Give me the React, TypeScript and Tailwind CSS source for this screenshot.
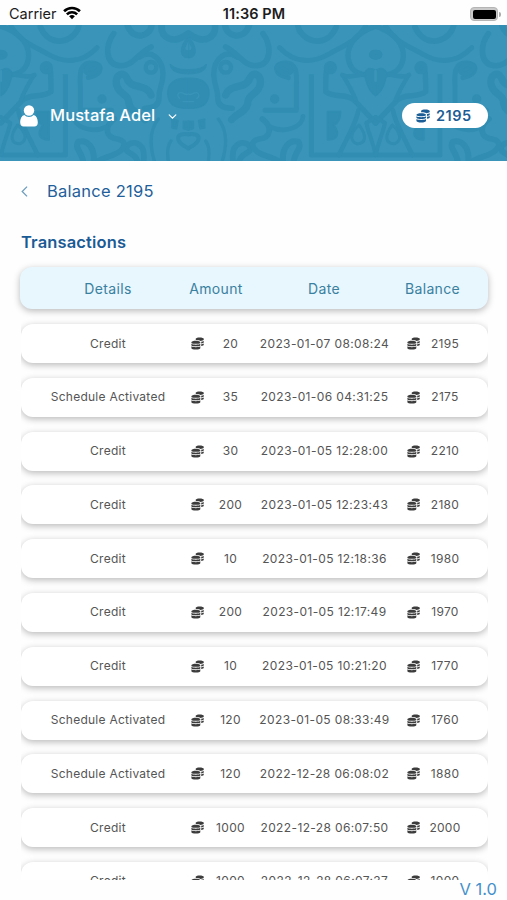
const ROWS = [
  ["Credit", "20", "2023-01-07 08:08:24", "2195"],
  ["Schedule Activated", "35", "2023-01-06 04:31:25", "2175"],
  ["Credit", "30", "2023-01-05 12:28:00", "2210"],
  ["Credit", "200", "2023-01-05 12:23:43", "2180"],
  ["Credit", "10", "2023-01-05 12:18:36", "1980"],
  ["Credit", "200", "2023-01-05 12:17:49", "1970"],
  ["Credit", "10", "2023-01-05 10:21:20", "1770"],
  ["Schedule Activated", "120", "2023-01-05 08:33:49", "1760"],
  ["Schedule Activated", "120", "2022-12-28 06:08:02", "1880"],
  ["Credit", "1000", "2022-12-28 06:07:50", "2000"],
  ["Credit", "1000", "2022-12-28 06:07:37", "1000"],
];

function Coins({ className }: { className: string }) {
  return (
    <svg viewBox="0 0 26 26" className={className} fill="currentColor">
      <path d="M9.500 3.200C10.500 1.800 13.500.8 17.300.8c4.600 0 8.200 1.200 8.200 2.800v2c-1 1.300-3.600 2-6.400 2.200-2.300-1.500-6-2-9.600-1.800z" />
      <path d="M20.400 9.400c2-.2 4-.7 5.100-1.500v2.800c0 1.100-2.100 2-5.100 2.400zM20.400 14.600c2-.2 4-.7 5.100-1.500v2.600c0 1.100-2.100 2-5.100 2.400z" />
      <path d="M9.700 7.700c4.900 0 8.900 1.300 8.900 3v1.100c-1.500 1.200-5 1.800-8.900 1.800s-7.400-.6-8.900-1.800v-1.100c0-1.700 4-3 8.900-3z" />
      <path d="M.8 13.600c1.500 1.200 5 1.700 8.900 1.700s7.400-.5 8.900-1.700v3.300c-1.500 1.300-5 1.800-8.900 1.800s-7.400-.5-8.900-1.800z" />
      <path d="M.8 18.700c1.500 1.200 5 1.700 8.900 1.700s7.400-.5 8.900-1.700v3.700c0 1.600-4 2.800-8.900 2.800S.8 24 .8 22.400z" />
    </svg>
  );
}

// Half of the ornament; it is mirrored about both of its vertical edges.
function Ornament() {
  return (
    <g fill="none" stroke="#318db2" strokeWidth="14" strokeLinecap="round" strokeLinejoin="round">
      <path d="M80 76C84 116 45 130 14 110L0 102" strokeWidth="20" />
      <path d="M0 112C14 122 24 146 20 162C16 174 8 174 0 174Z" strokeWidth="3" fill="#318db2" />
      <path d="M0 124L9 144C9 152 4 152 0 152Z" stroke="none" fill="#3a94b9" />
      <path d="M0 210C28 211 44 206 54 194C52 214 28 222 0 222Z" strokeWidth="4" fill="#318db2" />
      <path d="M0 236C44 234 64 254 62 284C59 316 40 326 0 326Z" strokeWidth="4" fill="#318db2" />
      <path d="M0 283C10 290 16 274 28 280C34 284 32 292 26 296M0 306H16" stroke="#3a94b9" strokeWidth="4" />
      <path d="M146 172C110 148 78 178 76 222C76 258 90 266 88 296C88 320 110 326 132 326" strokeWidth="16" />
      <circle cx="112" cy="203" r="16" strokeWidth="13" />
      <path d="M112 286C126 250 174 270 184 236C194 212 220 226 216 252C212 286 178 280 178 312C174 336 142 344 130 360" strokeWidth="22" />
      <path d="M224 102C250 138 250 194 206 198C166 202 152 160 112 142" strokeWidth="17" />
      <path d="M110 76C114 112 166 124 182 78" strokeWidth="19" />
      <path d="M274 144C318 190 370 192 420 164C470 136 502 128 532 79" strokeWidth="15" />
      <path d="M328 76C334 122 412 154 444 82" strokeWidth="17" />
      <path d="M300 234C254 224 254 190 292 190C326 190 326 222 324 260V332H230" strokeWidth="15" />
      <path d="M266 202C280 188 306 194 308 216C300 226 278 226 266 202Z" fill="#318db2" />
      <circle cx="259" cy="298" r="7" />
      <path d="M369 224V466H562" strokeWidth="15" strokeLinecap="butt" />
      <path d="M428 198C408 204 414 230 412 252V276C436 296 480 280 500 304L562 370" strokeWidth="16" />
      <circle cx="426" cy="204" r="13" fill="#318db2" />
      <path d="M464 228C474 244 490 270 502 300" strokeWidth="13" />
      <path d="M562 80C500 100 474 140 480 178C486 212 506 220 532 226" strokeWidth="16" />
      <path d="M462 226C490 240 520 218 534 226" strokeWidth="14" />
      <path d="M528 220C540 200 552 206 562 212V288C544 278 534 256 528 220Z" strokeWidth="4" fill="#318db2" />
      <path d="M562 214V244" stroke="#3a94b9" strokeWidth="7" />
      <ellipse cx="562" cy="165" rx="13" ry="8" fill="#318db2" />
      <path d="M510 332C504 370 478 410 452 466" strokeWidth="14" />
      <path d="M512 376C490 396 480 420 504 432C532 434 538 410 512 376Z" strokeWidth="9" />
      <path d="M562 352L534 370C540 400 552 420 562 466" strokeWidth="12" />
      <path d="M456 336H418V420C450 420 454 400 436 376C452 370 456 352 456 336Z" strokeWidth="6" fill="#318db2" />
      <path d="M32 364L48 360V384L36 386ZM0 366H14V386L0 390Z" strokeWidth="7" fill="#318db2" />
      <path d="M0 446C44 424 38 398 0 404" strokeWidth="12" />
      <path d="M90 358C116 390 118 430 102 484M52 424C64 440 64 460 60 484" strokeWidth="10" />
      <path d="M134 484C126 424 174 418 186 444C190 462 160 458 152 484" strokeWidth="17" />
      <path d="M222 358C252 380 250 414 212 418C180 424 190 452 226 466C250 474 266 480 274 486" strokeWidth="17" />
      <path d="M284 486C280 446 302 418 330 426C344 444 318 458 316 486" strokeWidth="18" />
      <path d="M246 382C296 404 344 378 344 350" strokeWidth="14" />
    </g>
  );
}

function HeaderPattern() {
  return (
    <svg viewBox="0 76 1521 408" preserveAspectRatio="none" className="absolute inset-0 h-full w-full blur-[0.5px]">
      <g transform="translate(565 0)"><Ornament /></g>
      <g transform="translate(565 0) scale(-1 1)"><Ornament /></g>
      <g transform="translate(1689 0) scale(-1 1)"><Ornament /></g>
    </svg>
  );
}

function StatusBar() {
  return (
    <div className="grid h-[25px] grid-cols-3 items-center pt-[3px] text-[14.5px] text-[#1c1c1c]">
      <div className="flex items-center gap-[6px] pl-[9px]">
        <span>Carrier</span>
        <svg viewBox="0 0 20 15" className="h-[14px] w-[18px] -translate-y-px">
          <g fill="none" stroke="#000" strokeWidth="2.900">
            <path d="M1.200 5.600a12.500 12.500 0 0 1 17.600 0" />
            <path d="M4.300 9a8.200 8.200 0 0 1 11.400 0" />
          </g>
          <path d="M10 14.500l-3.200-3.300a4.600 4.600 0 0 1 6.400 0z" />
        </svg>
      </div>
      <span className="pl-px text-center text-[14.500px] font-semibold tracking-[0.1px]">11:36 PM</span>
      <div className="flex items-center justify-end gap-px pr-[6px]">
        <div className="h-[14px] w-[28px] rounded-[4px] border border-[#b5b5b5] bg-[#c9c9c9] p-[1.500px]">
          <div className="h-full rounded-[2px] bg-black" />
        </div>
        <div className="h-[5px] w-[2px] rounded-r bg-[#ababab]" />
      </div>
    </div>
  );
}

export default function App() {
  return (
    <div className="flex h-[900px] w-[507px] flex-col overflow-hidden bg-[#fefefe] font-['Inter',sans-serif]">
      <StatusBar />
      <header className="relative h-[136px] shrink-0 overflow-hidden bg-[#3a94b9]">
        <HeaderPattern />
        <div className="relative flex items-center pt-[78px] pr-[19px] pl-[20px] text-white">
          <svg viewBox="0 0 18 22" className="h-[22px] w-[18px]" fill="currentColor">
            <circle cx="9" cy="5.500" r="5.200" />
            <path d="M4.300 9.900C1.300 10.900.2 14 .2 17.500c0 2.700 1.300 4.100 3.500 4.100h10.600c2.200 0 3.500-1.400 3.500-4.100 0-3.500-1.100-6.600-4.100-7.600a6.400 6.400 0 0 1-9.400 0z" />
          </svg>
          <span className="ml-[12px] text-[16.500px] font-medium tracking-[0.080px]">Mustafa Adel</span>
          <svg viewBox="0 0 10 6" className="ml-[13px] mt-[2px] h-[5px] w-[9px]" fill="none" stroke="currentColor" strokeWidth="1.400" strokeLinecap="round">
            <path d="M1 1l4 4 4-4" />
          </svg>
          <div className="ml-auto flex h-[25px] w-[86px] items-center rounded-full bg-white pl-[14px] text-[#1c5d95]">
            <Coins className="size-[14px]" />
            <span className="ml-[6px] text-[14.500px] font-semibold tracking-[0.500px]">2195</span>
          </div>
        </div>
      </header>
      <div className="flex h-[60px] shrink-0 items-center pl-[21px] text-[#1f609b]">
        <svg viewBox="0 0 7 12" className="h-[11px] w-[7px]" fill="none" stroke="#6e9dbd" strokeWidth="1.400">
          <path d="M6.300 .7L1 6l5.300 5.300" />
        </svg>
        <span className="ml-[19px] text-[16.500px] tracking-[0.250px]">Balance 2195</span>
      </div>
      <h1 className="h-[46px] shrink-0 pt-[9px] pl-[21px] text-[16.500px] font-semibold tracking-[0.150px] text-[#1b5b95]">Transactions</h1>
      <div className="relative z-10 mr-[19px] ml-[20px] grid h-[42px] shrink-0 grid-cols-[108px_108px_108px_109px] items-center rounded-[12px] bg-[#e8f6fe] pt-px pl-[34px] text-center text-[14px] leading-[20px] tracking-[0.350px] text-[#39819f] shadow-[0_2px_7px_rgba(0,0,0,0.28)]">
        <span>Details</span>
        <span>Amount</span>
        <span>Date</span>
        <span>Balance</span>
      </div>
      <div className="mr-[19px] ml-[21px] flex h-[571px] shrink-0 flex-col gap-[14.800px] overflow-hidden pt-[15px]">
        {ROWS.map(([details, amount, date, balance], i) => (
          <div
            key={i}
            className="grid h-[39px] shrink-0 grid-cols-[108px_108px_108px_109px] items-center rounded-[12px] bg-white pl-[33px] text-center text-[12px] leading-[18px] tracking-[0.300px] text-[#555] shadow-[0_2px_7px_rgba(0,0,0,0.28)]"
          >
            <span className="flex justify-center whitespace-nowrap tracking-[0.260px]">{details}</span>
            <span className="flex items-center pl-[29px]">
              <Coins className="size-[13px] text-[#3c3c3c]" />
              <span className="ml-[2.500px] w-[48px]">{amount}</span>
            </span>
            <span className="flex justify-center pl-px whitespace-nowrap tracking-[0.370px]">{date}</span>
            <span className="flex items-center pl-[29px]">
              <Coins className="size-[13px] text-[#3c3c3c]" />
              <span className="ml-px w-[48px]">{balance}</span>
            </span>
          </div>
        ))}
      </div>
      <footer className="flex justify-end pr-[10px] text-[16.500px] leading-[19px] text-[#4590cb]">V 1.0</footer>
    </div>
  );
}
